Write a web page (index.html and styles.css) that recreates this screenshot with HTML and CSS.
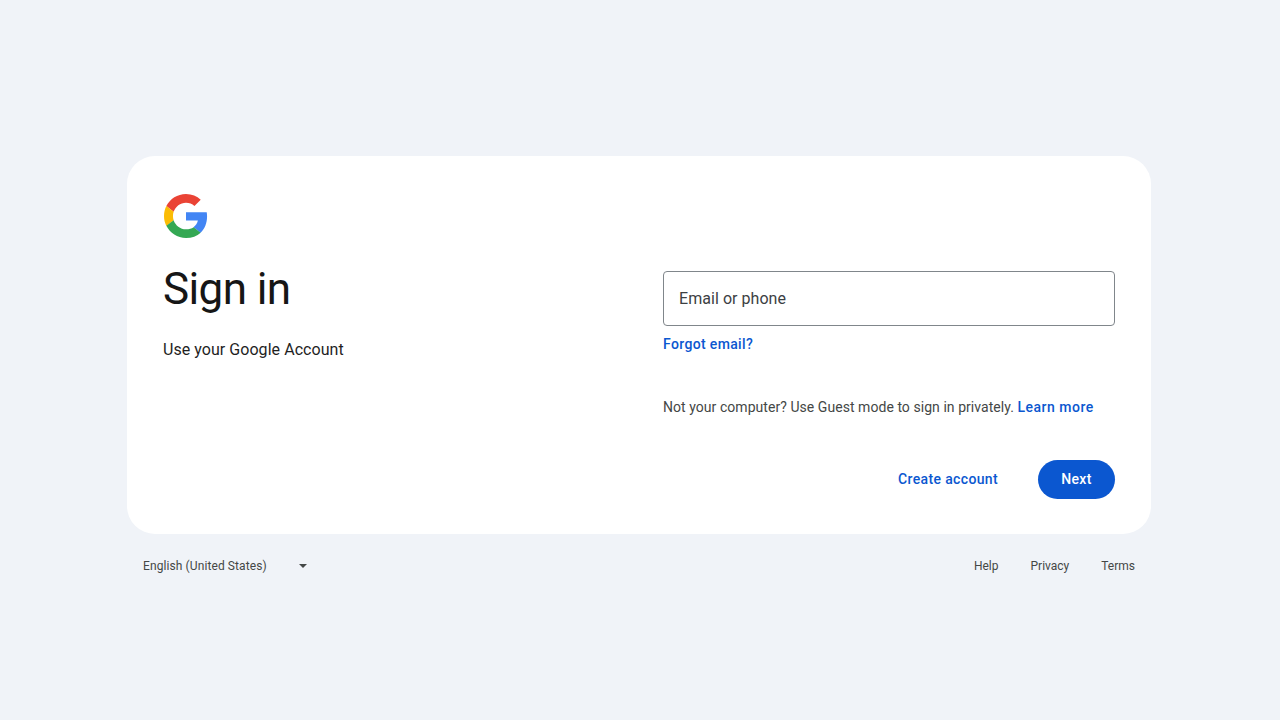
FILE: index.html
```html
<!DOCTYPE html>
<html lang="en">
<head>
<meta charset="utf-8">
<title>Sign in - Google Accounts</title>
<link rel="stylesheet" href="styles.css">
</head>
<body>
<div class="page">
  <main class="card">
    <section class="intro">
      <svg class="logo" viewBox="0 0 48 48" width="44" height="44" aria-label="Google">
        <path fill="#EA4335" d="M24 9.5c3.54 0 6.71 1.22 9.21 3.6l6.85-6.85C35.9 2.38 30.47 0 24 0 14.62 0 6.51 5.38 2.56 13.22l7.98 6.19C12.43 13.72 17.74 9.5 24 9.5z"/>
        <path fill="#4285F4" d="M46.98 24.55c0-1.57-.15-3.09-.38-4.55H24v9.02h12.94c-.58 2.96-2.26 5.48-4.78 7.18l7.73 6c4.51-4.18 7.09-10.36 7.09-17.65z"/>
        <path fill="#FBBC05" d="M10.53 28.59c-.48-1.45-.76-2.99-.76-4.59s.27-3.14.76-4.59l-7.98-6.19C.92 16.46 0 20.12 0 24c0 3.88.92 7.54 2.56 10.78l7.97-6.19z"/>
        <path fill="#34A853" d="M24 48c6.48 0 11.93-2.13 16.03-5.81l-7.73-6c-2.15 1.45-4.92 2.3-8.3 2.3-6.26 0-11.57-4.22-13.47-9.91l-7.98 6.19C6.51 42.62 14.62 48 24 48z"/>
      </svg>
      <h1 class="title">Sign in</h1>
      <p class="subtitle">Use your Google Account</p>
    </section>
    <section class="form">
      <div class="field"><span class="field-label">Email or phone</span></div>
      <a class="link forgot" href="#">Forgot email?</a>
      <p class="guest">Not your computer? Use Guest mode to sign in privately. <a class="link learn" href="#">Learn more</a></p>
      <div class="actions">
        <a class="link create" href="#">Create account</a>
        <button class="next" type="button">Next</button>
      </div>
    </section>
  </main>
  <footer class="footer">
    <div class="lang">
      <span>English (United States)</span>
      <span class="caret"></span>
    </div>
    <nav class="foot-links">
      <a href="#">Help</a>
      <a href="#">Privacy</a>
      <a href="#">Terms</a>
    </nav>
  </footer>
</div>
</body>
</html>
```
FILE: styles.css
```css
* { box-sizing: border-box; }
html, body { margin: 0; height: 100%; }
body {
  background: #f0f3f8;
  color: #1f1f1f;
  font-family: Roboto, "Liberation Sans", sans-serif;
  letter-spacing: 0.05px;
}
.page {
  width: 1024px;
  margin-left: 127px;
  padding-top: 156px;
}
.card {
  display: grid;
  grid-template-columns: 452px 452px;
  column-gap: 48px;
  height: 378px;
  padding: 38px 36px 35px;
  background: #fff;
  border-radius: 28px;
}
.logo { display: block; margin-left: 1px; }
.title {
  margin: 25px 0 0;
  font-size: 44px;
  line-height: 52px;
  font-weight: 400;
  letter-spacing: -0.6px;
  color: #161616;
}
.subtitle {
  margin: 23px 0 0;
  font-size: 16px;
  line-height: 24px;
  color: #1f1f1f;
}
.form {
  display: flex;
  flex-direction: column;
  padding-top: 77px;
}
.field {
  height: 55px;
  padding: 0 15px;
  display: flex;
  align-items: center;
  border: 1px solid #80868b;
  border-radius: 4px;
  font-size: 16px;
  color: #3c4043;
}
.link {
  color: #0b57d0;
  font-weight: 500;
  font-size: 14px;
  letter-spacing: 0.35px;
  text-decoration: none;
}
.forgot { margin-top: 8px; line-height: 20px; }
.guest {
  margin: 43px 0 0;
  font-size: 14px;
  line-height: 20px;
  color: #444746;
}
.learn { letter-spacing: 0.5px; }
.actions {
  display: flex;
  justify-content: flex-end;
  align-items: center;
  gap: 40px;
  margin-top: 43px;
}
.create { margin-bottom: 2px; }
.next {
  width: 77px;
  height: 39px;
  padding: 0 0 2px;
  border: 0;
  border-radius: 20px;
  background: #0b57d0;
  color: #fff;
  font: 500 14px Roboto, "Liberation Sans", sans-serif;
  letter-spacing: 0.35px;
}
.footer {
  display: flex;
  justify-content: space-between;
  align-items: center;
  height: 20px;
  margin-top: 22px;
  padding: 0 16px;
  font-size: 12px;
  letter-spacing: 0.1px;
  color: #444746;
}
.lang { display: flex; align-items: center; gap: 32px; }
.caret {
  width: 0;
  height: 0;
  border-left: 4px solid transparent;
  border-right: 4px solid transparent;
  border-top: 4px solid #444746;
}
.foot-links { display: flex; gap: 32px; letter-spacing: 0; }
.foot-links a { color: #444746; text-decoration: none; }
```
